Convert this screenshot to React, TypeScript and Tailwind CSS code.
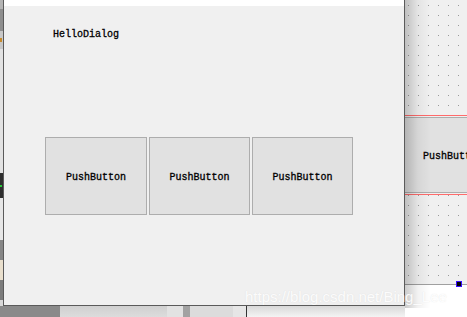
import React from "react";

const mono = { fontFamily: '"Liberation Mono", "DejaVu Sans Mono", monospace' };

function PushButton({ w }: { w: string }) {
  return (
    <div
      className={`${w} h-[78px] border border-[#adadad] bg-[#e1e1e1] flex items-center justify-center pt-[2px] text-[10px] text-black [-webkit-text-stroke:0.3px_black]`}
      style={mono}
    >
      PushButton
    </div>
  );
}

// dotted designer grid on the right
function GridDots() {
  const dots = [];
  for (let y = 5; y < 285; y += 10) {
    for (let x = 3; x < 62; x += 10) {
      dots.push(<rect key={`${x}-${y}`} x={x} y={y} width="1" height="1" fill="#9a9a9a" />);
    }
  }
  return (
    <svg className="absolute left-0 top-0" width="62" height="285">
      {dots}
    </svg>
  );
}

export default function App() {
  return (
    <div className="relative w-[467px] h-[317px] overflow-hidden bg-white flex">
      <div className="w-[405px] flex flex-col">
        <div className="flex h-[306px]">
          {/* bits of the window behind */}
          <div className="w-[3px] flex flex-col">
            <div className="h-[9px] bg-[#b4b4b4]" />
            <div className="h-[22px] bg-[#8e8e8e]" />
            <div className="h-[18px] bg-[#c8c8c8] flex items-center">
              <div className="w-[2px] h-[4px] bg-[#c88a2a]" />
            </div>
            <div className="h-[124px] bg-[#e2e2e2]" />
            <div className="h-[25px] bg-[#2e2e2e] flex items-center">
              <div className="w-[2px] h-[2px] bg-[#28c83c]" />
            </div>
            <div className="h-[42px] bg-[#e6e6e6]" />
            <div className="h-[20px] bg-[#868686]" />
            <div className="h-[20px] bg-[#e9dfcd]" />
            <div className="h-[20px] bg-[#7c7c7c]" />
            <div className="flex-1 bg-[#d8d8d8]" />
          </div>
          {/* dialog */}
          <div className="flex-1 flex flex-col border-l border-r border-b border-[#5a5a5a] bg-[#f0f0f0]">
            <div className="h-[6px] bg-white" />
            <div
              className="pl-[49px] pt-[23px] text-[10px] text-black leading-[12px] [-webkit-text-stroke:0.3px_black]"
              style={mono}
            >
              HelloDialog
            </div>
            <div className="flex gap-[2px] pl-[41px] pt-[96px]">
              <PushButton w="w-[102px]" />
              <PushButton w="w-[101px]" />
              <PushButton w="w-[101px]" />
            </div>
          </div>
        </div>
        <div className="flex-1 flex">
          <div className="w-[60px] bg-[#8a8a8a]" />
          <div className="w-[107px] bg-gradient-to-b from-[#d0d0d0] to-[#dcdcdc]" />
          <div className="w-[16px] bg-[#e2e2e2]" />
          <div className="w-[7px] bg-[#a2a2a2]" />
          <div className="w-[43px] bg-[#dcdcdc]" />
          <div className="w-[13px] bg-[#e6e6e6]" />
          <div className="w-px bg-[#333]" />
          <div className="flex-1 bg-gradient-to-b from-[#d8d8d8] to-[#f4f4f4]" />
        </div>
      </div>
      {/* form editor area */}
      <div className="relative flex-1 flex flex-col">
        <div className="relative h-[285px] bg-[#f0f0f0] border-b border-[#a0a0a0]">
          <GridDots />
          <div className="absolute left-0 right-0 top-[115px] h-[80px] border-t border-b border-[#ff6b6b] py-px">
            <div
              className="h-full border-t border-b border-[#adadad] bg-[#e1e1e1] pl-[18px] pt-[2px] flex items-center text-[10px] text-black whitespace-nowrap overflow-hidden [-webkit-text-stroke:0.3px_black]"
              style={mono}
            >
              PushButton
            </div>
          </div>
          <div className="absolute left-[51px] top-[281px] w-[6px] h-[6px] border border-[#3a10ff] bg-black" />
        </div>
        <div className="flex-1 bg-white" />
        {/* dialog drop shadow */}
        <div className="absolute left-0 top-0 w-[26px] h-[308px] bg-gradient-to-r from-black/20 via-black/5 to-transparent pointer-events-none" />
      </div>
      <div
        className="absolute left-[245px] top-[288px] text-[15px] leading-[18px] text-white/90 whitespace-nowrap"
        style={{ fontFamily: '"Liberation Sans", Arial, sans-serif', textShadow: "0 0 1px rgba(150,150,150,0.25)" }}
      >
        https://blog.csdn.net/Bing_Lee
      </div>
    </div>
  );
}
